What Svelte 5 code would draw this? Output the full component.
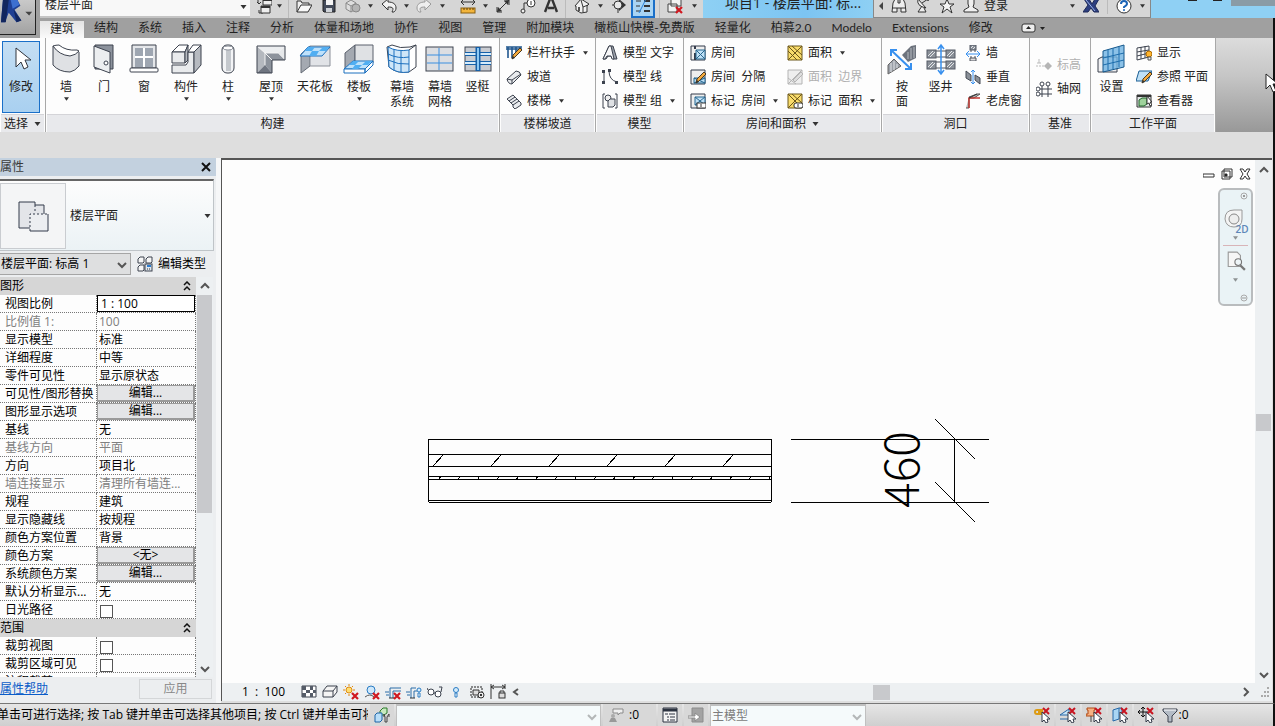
<script lang="ts">
    type BigTool = { icon: string, label: string, w: number, menu?: boolean };
    type SmallTool = { icon: string, label: string, menu?: boolean, off?: boolean };
    type Prop = { name: string, value?: string, kind?: 'input' | 'button' | 'check', off?: boolean };

    let activeTab = $state('建筑');
    let scale = $state('1 : 100');

    const tabs = ['建筑', '结构', '系统', '插入', '注释', '分析', '体量和场地', '协作', '视图', '管理',
        '附加模块', '橄榄山快模-免费版', '轻量化', '柏慕2.0', 'Modelo', 'Extensions', '修改'];

    const quick = [
        { icon: 'sync', w: 22 }, { icon: 'arrow', w: 8 }, { icon: 'sep', w: 10 },
        { icon: 'open', w: 22 }, { icon: 'save', w: 28 }, { icon: 'cube', w: 20 }, { icon: 'arrow', w: 14 },
        { icon: 'undo', w: 24 }, { icon: 'arrow', w: 10 }, { icon: 'redo', w: 26 }, { icon: 'arrow', w: 10 },
        { icon: 'gap', w: 12 }, { icon: 'measure', w: 18 }, { icon: 'arrow', w: 16 }, { icon: 'dims', w: 20 },
        { icon: 'tag', w: 30 }, { icon: 'letter', w: 16 }, { icon: 'sep', w: 12 },
        { icon: 'house', w: 22 }, { icon: 'arrow', w: 14 }, { icon: 'section', w: 24 },
        { icon: 'thin', w: 24 }, { icon: 'sep', w: 8 }, { icon: 'closeViews', w: 24 }, { icon: 'arrow', w: 14 }
    ];

    const build: BigTool[] = [
        { icon: 'wall', label: '墙', w: 40, menu: true },
        { icon: 'door', label: '门', w: 36 },
        { icon: 'window', label: '窗', w: 44 },
        { icon: 'component', label: '构件', w: 40, menu: true },
        { icon: 'column', label: '柱', w: 44, menu: true },
        { icon: 'roof', label: '屋顶', w: 42, menu: true },
        { icon: 'ceiling', label: '天花板', w: 46 },
        { icon: 'floor', label: '楼板', w: 42, menu: true },
        { icon: 'curtain', label: '幕墙\n系统', w: 44 },
        { icon: 'grid', label: '幕墙\n网格', w: 32 },
        { icon: 'mullion', label: '竖梃', w: 43 }
    ];
    const openings: BigTool[] = [
        { icon: 'byFace', label: '按\n面', w: 40 },
        { icon: 'shaft', label: '竖井', w: 37 }
    ];
    const stairs: SmallTool[] = [
        { icon: 'railing', label: '栏杆扶手', menu: true },
        { icon: 'ramp', label: '坡道' },
        { icon: 'stair', label: '楼梯', menu: true }
    ];
    const models: SmallTool[] = [
        { icon: 'modelText', label: '模型 文字' },
        { icon: 'modelLine', label: '模型 线' },
        { icon: 'modelGroup', label: '模型 组', menu: true }
    ];
    const rooms: SmallTool[] = [
        { icon: 'room', label: '房间' },
        { icon: 'roomSplit', label: '房间  分隔' },
        { icon: 'roomTag', label: '标记  房间', menu: true }
    ];
    const areas: SmallTool[] = [
        { icon: 'area', label: '面积', menu: true },
        { icon: 'areaEdge', label: '面积  边界', off: true },
        { icon: 'areaTag', label: '标记  面积', menu: true }
    ];
    const holes: SmallTool[] = [
        { icon: 'holeWall', label: '墙' },
        { icon: 'holeVert', label: '垂直' },
        { icon: 'dormer', label: '老虎窗' }
    ];
    const datum: SmallTool[] = [
        { icon: 'level', label: '标高', off: true },
        { icon: 'axes', label: '轴网' }
    ];
    const plane: SmallTool[] = [
        { icon: 'show', label: '显示' },
        { icon: 'refPlane', label: '参照 平面' },
        { icon: 'viewer', label: '查看器' }
    ];

    const graphics: Prop[] = [
        { name: '视图比例', kind: 'input' },
        { name: '比例值 1:', value: '100', off: true },
        { name: '显示模型', value: '标准' },
        { name: '详细程度', value: '中等' },
        { name: '零件可见性', value: '显示原状态' },
        { name: '可见性/图形替换', value: '编辑...', kind: 'button' },
        { name: '图形显示选项', value: '编辑...', kind: 'button' },
        { name: '基线', value: '无' },
        { name: '基线方向', value: '平面', off: true },
        { name: '方向', value: '项目北' },
        { name: '墙连接显示', value: '清理所有墙连...', off: true },
        { name: '规程', value: '建筑' },
        { name: '显示隐藏线', value: '按规程' },
        { name: '颜色方案位置', value: '背景' },
        { name: '颜色方案', value: '<无>', kind: 'button' },
        { name: '系统颜色方案', value: '编辑...', kind: 'button' },
        { name: '默认分析显示...', value: '无' },
        { name: '日光路径', kind: 'check' }
    ];
    const extents: Prop[] = [
        { name: '裁剪视图', kind: 'check' },
        { name: '裁剪区域可见', kind: 'check' },
        { name: '注释裁剪', kind: 'check' }
    ];

    const viewTools = ['detail', 'style', 'sun', 'shadow', 'crop', 'cropShow', 'glasses', 'bulb', 'worksharing', 'lockDim'];
    const pickTools = ['pickLink', 'pickUnder', 'pickPin', 'pickFace', 'pickDrag'];

    const redX = '<path d="M9 1l6 6M15 1l-6 6" stroke="#c81420" stroke-width="2" fill="none"/>';
    const lowX = '<path d="M9 9l6 6M15 9l-6 6" stroke="#d01820" stroke-width="2.2" fill="none"/>';
    const pointer = '<path d="M8 5v10l2-2 2 3 2-1-1-3h3z" fill="#fff" stroke="#333a48"/>';
    const pencil = '<path d="M6 14l1-4 7-7 2 2-7 7z" fill="#f4a93c" stroke="#4a3a20"/><path d="M6 14l1-3 2 2z" fill="#333"/>';
    const hatch = (x: number, y: number, w: number, h: number) =>
        `<rect x="${x}" y="${y}" width="${w}" height="${h}" fill="#8a9098" stroke="#555b66"/>` +
        `<path d="M${x + 1} ${y + h - 2}l${h - 3}-${h - 3}M${x + w - h + 2} ${y + h - 1}l${h - 3}-${h - 3}" stroke="#e4e6ea"/>`;

    // 32 unit drawings for the large ribbon buttons
    const large: Record<string, string> = {
        modify: '<path d="M11 5v19l5-5 3 7 4-2-3-7h6z" fill="#fff" stroke="#30343c"/>',
        wall: '<path d="M3 3Q13 12 28 8l1 1v14q-4 5-9 6Q9 29 3 22z" fill="#dfe1e4" stroke="#3c424e"/><path d="M3 3q3-1 6-1 7 6 18 5l2 1q-3 4-9 5Q9 12 3 3z" fill="#fff" stroke="#3c424e"/>',
        door: '<path d="M7 2h18v24H7z" fill="#8c929c" stroke="#3c424e"/><path d="M6 3l16 6v21L6 24z" fill="#eceef0" stroke="#3c424e"/><circle cx="18" cy="20" r="2" fill="#fff" stroke="#3c424e"/>',
        window: '<path d="M4 2h24v23H4z" fill="#e4e6e9" stroke="#3c424e"/><path d="M7 5h18v19H7z" fill="#9ea6b1"/><path d="M16 5v19M7 14h18" stroke="#fff" stroke-width="2"/><rect x="2" y="25" width="28" height="4" rx="1" fill="#fff" stroke="#3c424e"/>',
        component: '<path d="M2 9l7-7h9l-3 7z" fill="#fff" stroke="#3c424e"/><path d="M2 9h13v11H2z" fill="#e9ebed" stroke="#3c424e"/><path d="M15 9l3-7v15l-3 3z" fill="#b6bac0" stroke="#3c424e"/><path d="M2 22h14l2-3V9h6v21H2z" fill="#e9ebed" stroke="#3c424e"/><path d="M18 9l5-7h8l-7 7z" fill="#fff" stroke="#3c424e"/><path d="M24 9l7-7v20l-7 8z" fill="#b6bac0" stroke="#3c424e"/>',
        column: '<rect x="10" y="2" width="12" height="28" rx="5" fill="#f3f4f6" stroke="#3c424e"/><rect x="14" y="7" width="5" height="21" fill="#c4c8cd"/><ellipse cx="16" cy="5" rx="5" ry="2" fill="#fff" stroke="#8d929b"/>',
        roof: '<path d="M2 3h28l-7 7H10z" fill="#eceef0"/><path d="M2 3l8 7v12l-8 8z" fill="#b4b8be"/><path d="M10 10h13l7 7H17v13l-7-8z" fill="#8d939c"/><path d="M23 10l7-7v14z" fill="#e6e8ea"/><path d="M10 22l7 8H2z" fill="#6f7580"/><path d="M2 3l8 7 7 7M10 10v12M10 10h13" fill="none" stroke="#f4f4f4"/><path d="M2 3h28v14H17v13H2z" fill="none" stroke="#3c424e"/>',
        ceiling: '<path d="M2 11v19l9-7V3z" fill="#a4a9b1" stroke="#666c77"/><path d="M11 3h20v20H11z" fill="#e1e3e7" stroke="#8b9099"/><path d="M1 13l8-9h22l-8 9z" fill="#bfe1fa" stroke="#1c70bf"/><path d="M9 4h7l-3 4h7l-3 5h-7l3-5H6zM24 4h6l-3 4h-7z" fill="#51aef2"/>',
        floor: '<path d="M2 10l10-8v18L2 27z" fill="#a4a9b1" stroke="#5a606c"/><path d="M12 2h18v18H12z" fill="#dfe1e4" stroke="#5a606c"/><path d="M1 26l9-8h20l-8 8z" fill="#bfe1fa" stroke="#1c70bf"/><path d="M1 26h21v4H1zM22 26l8-8v4l-8 8z" fill="#fff" stroke="#1c70bf"/><path d="M10 18h6l-4 4h7l-4 4H9l3-4H6zM23 18h6l-4 4h-6z" fill="#51aef2"/>',
        curtain: '<path d="M1 4l5-2q8 4 18 2l6-2v22l-7 5q-12 2-20-5z" fill="#fff" stroke="#3c424e"/><path d="M2 4q9 5 21 3v22q-12 2-20-5z" fill="#cfe6f8" stroke="#1c70bf"/><path d="M2 11q10 5 21 3M2 17q10 5 21 4M8 6v21M15 8v21" fill="none" stroke="#1c70bf"/><path d="M23 7l7-5" stroke="#3c424e"/>',
        grid: '<rect x="2" y="4" width="27" height="24" fill="#dcdee2" stroke="#3c424e"/><path d="M15 5v22M3 12h25M3 20h25" stroke="#3a8fe0"/>',
        mullion: '<rect x="3" y="4" width="26" height="24" fill="#c9ccd2" stroke="#3c424e"/><path d="M3 11h26M3 20h26" stroke="#1660a8" stroke-width="4"/><path d="M3 11h26M3 20h26" stroke="#d6ecfb" stroke-width="2"/><path d="M16 4v24" stroke="#1660a8" stroke-width="5"/><path d="M16 5v22" stroke="#8cc8f4" stroke-width="2"/>',
        byFace: '<path d="M16 12l9-9 5-1v13l-8 4z" fill="#6d737d"/><path d="M25 5v11M28 4v11M22 9v7" stroke="#b8bcc2"/><path d="M2 22l6-6 7 7-8 5-5 3z" fill="#9a9fa7" stroke="#666"/><path d="M5 20v9M8 18v9M11 21v4" stroke="#e4e6e8"/><path d="M5 7l20 19M5 13V7h6M25 20v6h-6" fill="none" stroke="#3890ee" stroke-width="2"/>',
        shaft: hatch(2, 7, 9, 8) + hatch(21, 7, 9, 8) + hatch(2, 18, 9, 8) + hatch(21, 18, 9, 8) + '<path d="M11 8h10M11 14h10M11 19h10M11 25h10" stroke="#50555f"/><path d="M16 2v28M13 6l3-4 3 4M13 27l3 4 3-4" fill="none" stroke="#3890ee" stroke-width="1.500"/>',
        setPlane: '<path d="M2 16l4-2h15v15H2z" fill="#f0f0f2" stroke="#3c424e"/><path d="M7 8l21-6v22L7 29z" fill="#6fb3e2" fill-opacity=".8" stroke="#16588c"/><path d="M12 7v20M17 5v21M23 4v20M7 15l21-5M7 22l21-5" stroke="#1d6dac"/>',
        typePlan: '<path d="M2 2h16v3h9v17h-9v6H2z" fill="#e3e5e9" stroke="#333b4a"/><path d="M13 14h18v17H13z" fill="#eceef1"/><path d="M18 5v8M13 31V14h18" fill="none" stroke="#333b4a" stroke-dasharray="2 2"/><path d="M31 14v17H13" fill="none" stroke="#333b4a"/>'
    };

    // 16 unit drawings: toolbars, small ribbon rows, status bar
    const small: Record<string, string> = {
        sync: '<path d="M5 1H2v4M3 12v3h4M1 4l2 2 2-2" fill="none" stroke="#333"/><path d="M7 0h9v7H7zM5 8h9v7H5z" fill="#eee" stroke="#333"/><path d="M5 9h9M7 2h9" stroke="#333" stroke-width="2"/>',
        open: '<path d="M1 14V3h4l1 2h7v3" fill="#eee" stroke="#333"/><path d="M1 14l4-7h11l-4 7z" fill="#f8f8f8" stroke="#333"/>',
        save: '<path d="M2 2h12v12H3l-1-1z" fill="#444b5a" stroke="#222"/><path d="M5 2h7v5H5z" fill="#f4f4f4"/><path d="M5 10h6v4H5z" fill="#cfd3d8"/>',
        cube: '<path d="M1 5l5-3 5 3v6l-5 3-5-3z" fill="#ddd" stroke="#8a8a8a"/><path d="M1 5l5 3 5-3M6 8v6" fill="none" stroke="#8a8a8a"/><circle cx="11" cy="10" r="4" fill="#b4b4b4" stroke="#888"/>',
        undo: '<path d="M1 6l6-5v3c5 0 8 2 8 6 0 2-1 3-2 4h-2c2-4 1-5-4-5v3z" fill="#f2f2f2" stroke="#333"/>',
        redo: '<path d="M15 6L9 1v3C4 4 1 6 1 10c0 2 1 3 2 4h2c-2-4-1-5 4-5v3z" fill="#eee" stroke="#999"/>',
        measure: '<path d="M1 4h14M4 1L1 4l3 3M12 1l3 3-3 3" fill="none" stroke="#333"/><rect x="1" y="10" width="14" height="5" fill="#f3b53c" stroke="#8a6012"/><path d="M4 10v2M7 10v2M10 10v2M13 10v2" stroke="#5c3e08"/>',
        dims: '<path d="M2 14L14 2M2 9v5h5M9 2h5v5" fill="none" stroke="#333"/><path d="M2 14l1-5 4 4zM14 2l-1 5-4-4z" fill="#333"/>',
        tag: '<circle cx="11" cy="5" r="4" fill="#fff" stroke="#333"/><path d="M11 3v4M7 5H4v6" fill="none" stroke="#333"/><circle cx="3" cy="13" r="2" fill="#eee" stroke="#333"/>',
        letter: '<path d="M2 14L7 1h2l5 13M5 10h6" fill="none" stroke="#333" stroke-width="2.4"/>',
        house: '<path d="M1 8l6-7 8 5-2 2v6l-6 1-5-3V8z" fill="#f0f0f0" stroke="#333"/><path d="M7 2l2 7 5-2M9 9v5" fill="none" stroke="#333"/><path d="M4 9h2v4H4z" fill="#555"/>',
        section: '<path d="M8 1l7 6-7 6z" fill="#333"/><circle cx="7" cy="7" r="4" fill="#e8e8e8" stroke="#333"/><path d="M7 11v4M1 7h2" stroke="#333"/>',
        thin: '<path d="M1 3h5M1 8h4M1 13h5" stroke="#333"/><path d="M9 3h6M9 8h6M9 13h6" stroke="#333" stroke-width="2"/><path d="M4 15L11 1" stroke="#2a82d8"/>',
        closeViews: '<path d="M4 1h10v7H4zM1 6h9v8H1z" fill="#f2f2f2" stroke="#444"/>' + lowX,
        binoculars: '<path d="M2 5l2-4h3v4h2V1h3l2 4 1 9h-5v-4H6v4H1z" fill="#eee" stroke="#333"/><path d="M1 10h5M10 10h5" stroke="#333"/>',
        dish: '<path d="M3 1q-2 7 8 9zM7 8l-4 6h8l-2-4M7 5l6-4" fill="#eee" stroke="#333"/><circle cx="13" cy="2" r="1" fill="#333"/>',
        star: '<path d="M8 1l2 5h5l-4 3 2 6-5-4-5 4 2-6-4-3h5z" fill="#f4f4f4" stroke="#333"/>',
        person: '<path d="M5 1h6v5l-1 3 5 3v2H1v-2l5-3-1-3z" fill="#f0f0f0" stroke="#333"/>',
        exchange: '<path d="M1 1h5l3 5 3-5h4l-4 7 4 6h-5l-3-4-3 4H0l5-7z" fill="#2d3f80" stroke="#1e2a58"/><path d="M3 2l9 11" stroke="#9db4e8"/>',
        help: '<circle cx="8" cy="8" r="7" fill="#fff" stroke="#333"/><path d="M5 6q0-3 3-3t3 3q0 1-3 3v1" fill="none" stroke="#1b63b5" stroke-width="2"/><circle cx="8" cy="12" r="1" fill="#1b63b5"/>',
        railing: '<path d="M0 2h16M0 4h16M2 2v11M6 2v11M10 2v9M14 2v4" stroke="#22588f" stroke-width="1.6"/>' + pencil,
        ramp: '<path d="M1 10l9-8q4 0 5 4l-9 9q-4 0-5-5z" fill="#e9ebee" stroke="#3c424e"/><path d="M1 10l5 1 9-6M6 11v4" fill="none" stroke="#3c424e"/>',
        stair: '<path d="M1 6l6-4 2 2 2 2 2 2 2 2v2l-6 4-2-2V12l-2-2-2-2z" fill="#e9ebee" stroke="#3c424e"/><path d="M3 8l6-4M5 10l6-4M7 12l6-4" stroke="#3c424e"/>',
        modelText: '<path d="M1 14L7 1h4l4 13h-4l-1-3H6l-2 3z" fill="#9da2ab" stroke="#3c424e"/><path d="M1 14L7 1h2l3 13h-2l-1-3H5l-2 3z" fill="#f7f7f8" stroke="#3c424e"/>',
        modelLine: '<path d="M2 2v12M7 2q0 9 8 11" fill="none" stroke="#3c424e"/><path d="M0 1h3v3H0zM0 12h3v3H0zM6 0h3v3H6zM13 12h3v3h-3z" fill="#3c424e"/>',
        modelGroup: '<path d="M3 1H1v14h2M13 1h2v14h-2" fill="none" stroke="#3c424e"/><circle cx="6" cy="5" r="3" fill="#eee" stroke="#3c424e"/><path d="M6 8l2-2h5v6l-2 2H6z" fill="#dfe1e4" stroke="#3c424e"/>',
        room: '<path d="M1 1h14v14H1z" fill="#eee" stroke="#333b4a"/><path d="M5 1v3M5 8v7" stroke="#333b4a" stroke-width="2"/><path d="M6 5h9v9H6zM6 5l9 9M15 5l-9 9" fill="#bfe0f6" stroke="#27678f"/>',
        roomSplit: '<path d="M1 1h14v14H1z" fill="#eee" stroke="#333b4a"/><path d="M4 9h11v5H4zM4 9l11 5M15 9L4 14" fill="#bfe0f6" stroke="#27678f"/>' + pencil,
        roomTag: '<path d="M1 1h14v14H1z" fill="#eee" stroke="#333b4a"/><path d="M5 4h10v8H5zM5 4l10 8M15 4L5 12" fill="#bfe0f6" stroke="#27678f"/><rect x="7" y="10" width="9" height="5" fill="#fff" stroke="#333"/><path d="M11 11v3" stroke="#333"/>',
        area: '<path d="M1 1h14v14H1z" fill="#f9dc6b" stroke="#6b561a"/><path d="M1 1l14 14M15 1L1 15M5 1l10 9M1 6l9 9" stroke="#6b561a"/>',
        areaEdge: '<path d="M1 1h14v14H1z" fill="#eee" stroke="#b4b4b4"/><path d="M1 15L15 1M1 9l8 6M6 11l8-8 2 2-8 8z" fill="#ddd" stroke="#b4b4b4"/>',
        areaTag: '<path d="M1 1h14v14H1z" fill="#f9dc6b" stroke="#6b561a"/><path d="M1 1l14 14M15 1L1 15M5 1l10 9" stroke="#6b561a"/><rect x="7" y="10" width="9" height="5" rx="2" fill="#fff" stroke="#333"/><path d="M11 11v3" stroke="#333"/>',
        holeWall: hatch(5, 0, 6, 5) + '<path d="M5 13h6v3H5z" fill="#ddd" stroke="#50555f"/><path d="M6 5v2M10 5v2M6 11v2M10 11v2" stroke="#50555f"/><path d="M1 9h14M4 6L1 9l3 3M12 6l3 3-3 3" fill="none" stroke="#3890ee"/>',
        holeVert: '<path d="M1 2l5 4v6L1 9zM10 6l5 3v6l-5-4z" fill="#8a9098" stroke="#444a55"/><path d="M8 1v14M6 3l2-2 2 2M6 13l2 2 2-2" fill="none" stroke="#3890ee"/>',
        dormer: '<path d="M1 15h3V5h5L15 1h-3L4 4" fill="#bbb" stroke="#555"/><path d="M4 15V5h11" fill="none" stroke="#c23a34" stroke-width="1.5"/><path d="M4 5l8-4" stroke="#333"/>',
        level: '<path d="M0 9h15" stroke="#bbb" stroke-dasharray="2 1"/><path d="M3 2v4M1 6h4" stroke="#bbb"/><path d="M12 5l4 4-4 4-4-4z" fill="#b5b5b5"/>',
        axes: '<path d="M6 5v11M12 5v11M4 8h12M4 13h12" stroke="#3c424e"/><circle cx="6" cy="3" r="2" fill="#fff" stroke="#3c424e"/><circle cx="12" cy="3" r="2" fill="#fff" stroke="#3c424e"/><circle cx="2" cy="8" r="2" fill="#fff" stroke="#3c424e"/><circle cx="2" cy="13" r="2" fill="#fff" stroke="#3c424e"/>',
        show: '<path d="M1 3l12-2v11L1 15zM5 2v12M9 1v12M1 7l12-2M1 11l12-3" fill="none" stroke="#3c424e"/><circle cx="13" cy="9" r="3" fill="#ffb52e" stroke="#b06c00"/><path d="M12 12h3v3h-3z" fill="#eee" stroke="#555"/>',
        refPlane: '<path d="M3 2h13l-4 10H0z" fill="#bfe0f6" stroke="#1b5f94"/>' + pencil,
        viewer: '<path d="M1 2h14v12H1z" fill="#e4e6e8" stroke="#333"/><path d="M1 3h14" stroke="#333" stroke-width="2"/><path d="M3 7l3-2h5v6l-3 2H3z" fill="#9ed29b" stroke="#20642a"/><path d="M11 3v8l2-1 1 3 2-1-2-3h2z" fill="#fff" stroke="#333"/>',
        editType: '<path d="M1 3l2-2h4v5l-1 1H1zM9 3l2-2h4v5l-1 1H9zM1 11l2-2h4v5l-1 1H1z" fill="#f6f6f6" stroke="#3c424e"/><rect x="8" y="8" width="7" height="7" fill="#e0e7ef" stroke="#3c424e"/><path d="M10 10h4" stroke="#2c7cd0" stroke-width="2"/><path d="M10 13h1M12 13h1" stroke="#333"/>',
        detail: '<path d="M1 2h14v11H1z" fill="#fff" stroke="#3c424e"/><path d="M1 2h4v4H1zM9 2h3v4H9zM5 6h4v3H5zM12 6h3v3h-3zM1 9h4v4H1zM9 9h3v4H9z" fill="#555c68"/>',
        style: '<path d="M1 7l4-5h10v6l-4 5H1z" fill="#f4f4f4" stroke="#3c424e"/><path d="M1 7h10v6M11 7l4-5" fill="none" stroke="#3c424e"/>',
        sun: '<circle cx="6" cy="6" r="3" fill="#ffdf70" stroke="#e08a10"/><path d="M6 0v2M6 10v2M0 6h2M10 6h2M2 2l1 1M9 3l1-1M2 10l1-1" stroke="#e08a10"/>' + lowX,
        shadow: '<circle cx="7" cy="6" r="4" fill="#cfe8fa" stroke="#2a7cc4"/><path d="M1 13q5-4 9 0" fill="none" stroke="#555"/>' + lowX,
        crop: '<path d="M0 8h4M1 11h3M5 14V4h11M8 14V7h8" fill="none" stroke="#2a6ca8"/><path d="M4 14h5" stroke="#333"/>' + lowX,
        cropShow: '<path d="M0 8h4M1 11h3M5 14V4h5M8 14V7h3" fill="none" stroke="#2a6ca8"/><path d="M4 14h5" stroke="#333"/><circle cx="13" cy="6" r="2" fill="#d5ecfb" stroke="#2a7cc4"/><path d="M12 9h2v4h-2z" fill="#fff" stroke="#2a7cc4"/>',
        glasses: '<circle cx="4" cy="8" r="3" fill="#fff" stroke="#3c424e"/><circle cx="11" cy="10" r="3" fill="#fff" stroke="#3c424e"/><path d="M1 6L0 4M7 9h2M14 8l1-5h-3" fill="none" stroke="#3c424e"/>',
        bulb: '<circle cx="8" cy="6" r="2.5" fill="#d5ecfb" stroke="#2a7cc4"/><path d="M7 9h2v4H7z" fill="#fff" stroke="#2a7cc4"/>',
        worksharing: '<path d="M2 3h11v10H2z" fill="none" stroke="#222" stroke-dasharray="2 1"/><path d="M4 6h6v5H4z" fill="#ddd" stroke="#333"/><circle cx="12" cy="11" r="3" fill="#eee" stroke="#333"/><path d="M11 10h2v2h-2z" fill="#333"/>',
        lockDim: '<path d="M1 0v15M15 0v5M1 3h14M4 1L1 3l3 2M12 1l3 2-3 2" fill="none" stroke="#333"/><rect x="9" y="9" width="6" height="5" fill="#ddd" stroke="#333"/><path d="M10 9V7h4v2" fill="none" stroke="#333"/>',
        worksets: '<path d="M6 4l3-3h4v5L10 8H6z" fill="#c8eabf" stroke="#2b7a2a"/><path d="M1 8l2-2h5v7l-2 2H1z" fill="#b9def8" stroke="#1d64a8"/><path d="M10 7l1 3v5h2v-5l2-3M10 7v3M15 7v3" fill="none" stroke="#444"/>',
        requests: '<path d="M5 2h10v4h-3l-2 2V6H5z" fill="#f0f0f0" stroke="#8a8a8a"/><path d="M1 15l2-4h4l2 4z" fill="#999"/><circle cx="5" cy="9" r="2" fill="#aaa"/>',
        options: '<path d="M1 1h14v14H1z" fill="#f4f4f4" stroke="#2c3340"/><path d="M1 3h14" stroke="#2c3340" stroke-width="3"/><path d="M3 7h3M7 7h6M5 10h2M8 10h5M5 13h2M8 13h5" stroke="#2c3340"/>',
        addOption: '<path d="M4 1h11v14H4z" fill="#a3a3a3" stroke="#8c8c8c"/><path d="M0 9h7V6l5 4-5 4v-3H0z" fill="#fff" stroke="#8c8c8c"/>',
        filter: '<path d="M1 2h14v2l-5 5v6H6V9L1 4z" fill="#b4bcc6" stroke="#3c424e"/><path d="M2 3h12" stroke="#fff"/>',
        pickLink: '<path d="M9 3H3Q1 3 1 5t2 2h5M4 5h5" fill="none" stroke="#dc9a12" stroke-width="2"/>' + redX + pointer,
        pickUnder: '<path d="M0 8l9-6v6zM0 12h9" fill="#cbe6f8" stroke="#2668a8"/>' + redX + pointer,
        pickPin: '<path d="M1 1h8v2H8v4h2v2H0V7h2V3H1z" fill="#f6b284" stroke="#b04a16"/><path d="M5 9v6" stroke="#444"/>' + redX + pointer,
        pickFace: '<path d="M1 3l6-2v11l-6 2zM7 1h3v9" fill="#a9d5f4" stroke="#2668a8"/>' + redX + pointer,
        pickDrag: '<path d="M5 0v10M0 5h10M3 2l2-2 2 2M3 8l2 2 2-2M2 3L0 5l2 2" fill="none" stroke="#111"/>' + redX + pointer
    };
</script>

{#snippet big(name: string)}
    <svg class="i32" viewBox="0 0 32 32" aria-hidden="true">{@html large[name]}</svg>
{/snippet}

{#snippet ico(name: string)}
    <svg class="i16" viewBox="0 0 16 16" aria-hidden="true">{@html small[name]}</svg>
{/snippet}

{#snippet down()}
    <svg class="down" viewBox="0 0 6 4" aria-hidden="true"><path d="M0 0h6L3 4z" fill="#333" /></svg>
{/snippet}

{#snippet chevron(d: string)}
    <svg class="chev" viewBox="0 0 10 10" aria-hidden="true"><path {d} fill="none" stroke="#555" stroke-width="2" /></svg>
{/snippet}

{#snippet bigTools(list: BigTool[])}
    {#each list as t (t.label)}
        <button class="big" style:width="{t.w}px">
            {@render big(t.icon)}
            <span>{t.label}</span>
            {#if t.menu}{@render down()}{/if}
        </button>
    {/each}
{/snippet}

{#snippet smallTools(list: SmallTool[])}
    <div class="stack">
        {#each list as t (t.label)}
            <button class="small" disabled={t.off}>
                {@render ico(t.icon)}
                <span>{t.label}</span>
                {#if t.menu}{@render down()}{/if}
            </button>
        {/each}
    </div>
{/snippet}

{#snippet group(title: string, rows: Prop[])}
    <tbody>
        <tr class="group"><th colspan="2"><div>{title}
            <svg viewBox="0 0 8 10" aria-hidden="true"><path d="M1 4l3-3 3 3M1 9l3-3 3 3" fill="none" stroke="#111" stroke-width="1.5" /></svg>
        </div></th></tr>
        {#each rows as row (row.name)}
            <tr class:off={row.off}>
                <th scope="row">{row.name}</th>
                <td>
                    {#if row.kind === 'input'}
                        <input type="text" bind:value={scale} aria-label={row.name} />
                    {:else if row.kind === 'button'}
                        <button aria-label="{row.name} {row.value}">{row.value}</button>
                    {:else if row.kind === 'check'}
                        <input type="checkbox" aria-label={row.name} />
                    {:else}
                        {row.value}
                    {/if}
                </td>
            </tr>
        {/each}
    </tbody>
{/snippet}

<div class="app">
    <header class="top">
        <button class="logo" aria-label="应用程序菜单">
            <svg viewBox="0 0 36 36" aria-hidden="true">
                <path d="M3 0h15l3 6-6 4 7 11-5 2-8-10-4 10H1z" fill="#1f3f94" />
                <path d="M3 0h6L6 23H1zM14 10l8 11-5 2z" fill="#12265e" />
                <path d="M11 0h7l2 5-7 4z" fill="#3d6fd0" />
                <path d="M26 12h7l-3 4z" fill="#444" />
            </svg>
        </button>
        <div class="titlebar">
            <div class="bar">
                <div class="view-pick">
                    <select aria-label="当前视图"><option>楼层平面</option></select>
                    {@render down()}
                </div>
                <div class="quick">
                    {#each quick as q}
                        {#if q.icon === 'sep' || q.icon === 'gap'}
                            <i class={q.icon} style:width="{q.w}px"></i>
                        {:else}
                            <button class:on={q.icon === 'thin'} style:width="{q.w}px" aria-label={q.icon}>
                                {#if q.icon === 'arrow'}{@render down()}{:else}{@render ico(q.icon)}{/if}
                            </button>
                        {/if}
                    {/each}
                </div>
                <div class="caption">项目1 - 楼层平面: 标...</div>
                <div class="info">
                    <svg class="left" viewBox="0 0 4 8" aria-hidden="true"><path d="M4 0v8L0 4z" fill="#444" /></svg>
                    <button aria-label="搜索">{@render ico('binoculars')}</button>
                    <button aria-label="通讯中心">{@render ico('dish')}</button>
                    <button aria-label="收藏夹">{@render ico('star')}</button>
                    <button class="sign-in">{@render ico('person')}登录</button>
                    <button class="push" aria-label="登录菜单">{@render down()}</button>
                    <button aria-label="Exchange">{@render ico('exchange')}</button>
                    <button class="help" aria-label="帮助">{@render ico('help')}</button>
                    {@render down()}
                </div>
                <div class="win">
                    <button aria-label="最小化"></button>
                    <button aria-label="最大化"></button>
                    <button class="close" aria-label="关闭"></button>
                </div>
            </div>
        </div>
        <nav class="tabs">
            {#each tabs as tab (tab)}
                <button class:active={tab === activeTab} onclick={() => activeTab = tab}>{tab}</button>
            {/each}
            <button class="fold" aria-label="最小化功能区">
                <svg viewBox="0 0 24 10" aria-hidden="true">
                    <rect x="1" y="1" width="13" height="8" rx="2" fill="#eee" stroke="#333" />
                    <path d="M5 6h5L7.500 3zM19 4h5l-2.500 3z" fill="#222" />
                </svg>
            </button>
        </nav>
    </header>

    <div class="ribbon">
        <section class="modify">
            <div class="tools"><button class="big selected">{@render big('modify')}<span>修改</span></button></div>
            <h2>选择 {@render down()}</h2>
        </section>
        <section><div class="tools">{@render bigTools(build)}</div><h2>构建</h2></section>
        <section class="stairs"><div class="tools">{@render smallTools(stairs)}</div><h2>楼梯坡道</h2></section>
        <section class="models"><div class="tools">{@render smallTools(models)}</div><h2>模型</h2></section>
        <section class="rooms">
            <div class="tools">{@render smallTools(rooms)}{@render smallTools(areas)}</div>
            <h2>房间和面积 {@render down()}</h2>
        </section>
        <section class="openings"><div class="tools">{@render bigTools(openings)}{@render smallTools(holes)}</div><h2>洞口</h2></section>
        <section class="datum"><div class="tools">{@render smallTools(datum)}</div><h2>基准</h2></section>
        <section class="plane">
            <div class="tools">
                <button class="big">{@render big('setPlane')}<span>设置</span></button>
                {@render smallTools(plane)}
            </div>
            <h2>工作平面</h2>
        </section>
        <div class="rest">
            <svg viewBox="0 0 14 20" aria-hidden="true"><path d="M1 1v15l4-4 3 7 3-1-3-7h5z" fill="#fff" stroke="#222" /></svg>
        </div>
    </div>

    <div class="work">
        <aside class="palette">
            <div class="head">属性
                <button aria-label="关闭属性"><svg viewBox="0 0 10 10"><path d="M1 1l8 8M9 1L1 9" stroke="#111" stroke-width="2" /></svg></button>
            </div>
            <button class="type">
                <span class="thumb">{@render big('typePlan')}</span>
                <span class="type-name">楼层平面</span>
                {@render down()}
            </button>
            <div class="instance">
                <div class="combo">
                    <select aria-label="图元"><option>楼层平面: 标高 1</option></select>
                    {@render chevron('M1 3l4 4 4-4')}
                </div>
                <button>{@render ico('editType')}编辑类型</button>
            </div>
            <div class="props">
                <div class="rows">
                    <table>
                        <colgroup><col class="name"><col></colgroup>
                        {@render group('图形', graphics)}
                        {@render group('范围', extents)}
                    </table>
                </div>
                <div class="vbar">
                    {@render chevron('M1 7l4-4 4 4')}
                    <i></i>
                    {@render chevron('M1 3l4 4 4-4')}
                </div>
            </div>
            <footer>
                <a href="#help">属性帮助</a>
                <button disabled>应用</button>
            </footer>
        </aside>

        <main class="view">
            <div class="canvas">
                <svg class="drawing" viewBox="420 410 580 120" shape-rendering="crispEdges" aria-label="楼板剖面">
                    <g fill="none" stroke="#000">
                        <path d="M428.500 502V439.500H771.500V502" />
                        <path d="M428 454.500h343M428 466.500h343M428 476.500h343M428 479.500h343M428 500.500h343M429 502.500h342" />
                        {#each [0, 1, 2, 3, 4, 5] as n}
                            <path d="M{433 + n * 58} 466l11-12" />
                        {/each}
                        {#each Array(18) as _, n}
                            <path d="M{439 + n * 19.4} 479l2-3" />
                        {/each}
                        <path d="M791 439.500h198M791 502.500h198M954.500 439v63" />
                        <path d="M935 419l40 40M935 482l40 40" />
                    </g>
                    <text transform="translate(919 508) rotate(-90)">460</text>
                </svg>
                <div class="doc-controls">
                    <button aria-label="最小化视图"><svg viewBox="0 0 12 12"><path d="M0 6h11v3H0z" fill="#fff" stroke="#333" /></svg></button>
                    <button aria-label="还原视图"><svg viewBox="0 0 12 12"><path d="M3 1h8v8H3zM1 3h8v8H1z" fill="#fff" stroke="#333" /><path d="M4 6h2v2H4z" stroke="#333" /></svg></button>
                    <button aria-label="关闭视图"><svg viewBox="0 0 12 12"><path d="M1 1h3l2 3 2-3h3L8 6l3 5H8L6 8l-2 3H1l3-5z" fill="#fff" stroke="#333" /></svg></button>
                </div>
                <div class="nav">
                    <svg class="dot" viewBox="0 0 8 8"><circle cx="4" cy="4" r="3" fill="none" stroke="#aaa" /><path d="M3 3l2 2M5 3L3 5" stroke="#999" /></svg>
                    <button class="wheel" aria-label="二维控制盘">
                        <svg viewBox="0 0 20 20"><path d="M1 10q0-9 9-9h8v9q0 8-8 8t-9-8z" fill="#f4f4f4" stroke="#999" /><circle cx="10" cy="10" r="5" fill="#eee" stroke="#888" /></svg>
                        <span>2D</span>
                    </button>
                    {@render down()}
                    <hr>
                    <button aria-label="区域放大">
                        <svg viewBox="0 0 18 18"><path d="M2 1h8l3 3v10H2z" fill="#f6f6f6" stroke="#999" /><circle cx="11" cy="10" r="3" fill="#eef5f8" stroke="#777" /><path d="M13 13l4 4" stroke="#777" stroke-width="2" /></svg>
                    </button>
                    {@render down()}
                    <svg class="dot end" viewBox="0 0 8 8"><circle cx="4" cy="4" r="3" fill="none" stroke="#aaa" /><path d="M2 4h4" stroke="#999" /></svg>
                </div>
            </div>
            <div class="vbar wide">
                {@render chevron('M1 7l4-4 4 4')}
                <i></i>
                {@render chevron('M1 3l4 4 4-4')}
            </div>
            <div class="view-bar">
                <button class="ratio">1&nbsp; :&nbsp; 100</button>
                {#each viewTools as name}
                    <button aria-label={name}>{@render ico(name)}</button>
                {/each}
                {@render chevron('M7 2L3 5l4 3')}
                <i></i>
                {@render chevron('M3 1l4 4-4 4')}
            </div>
            <svg class="grip" viewBox="0 0 16 16" aria-hidden="true"><path d="M12 5h2M9 9h2M12 9h2M6 13h2M9 13h2M12 13h2" stroke="#aaa" stroke-width="2" /></svg>
        </main>
    </div>

    <footer class="status">
        <p>单击可进行选择; 按 Tab 键并单击可选择其他项目; 按 Ctrl 键并单击可将</p>
        <button aria-label="工作集">{@render ico('worksets')}</button>
        <div class="combo workset">
            <select aria-label="活动工作集"><option></option></select>
            {@render chevron('M1 3l4 4 4-4')}
        </div>
        <button class="req">{@render ico('requests')}:0</button>
        <button aria-label="设计选项">{@render ico('options')}</button>
        <button aria-label="添加到设计选项集">{@render ico('addOption')}</button>
        <div class="combo option">
            <select aria-label="活动设计选项"><option>主模型</option></select>
            {@render chevron('M1 3l4 4 4-4')}
        </div>
        <div class="picks">
            {#each pickTools as name}
                <button aria-label={name}>{@render ico(name)}</button>
            {/each}
            <button class="filter">{@render ico('filter')}:0</button>
        </div>
    </footer>
</div>

<style>
:global(body) {
    margin: 0;
    background: #dedede;
}
.app {
    display: flex;
    flex-direction: column;
    height: 100vh;
    overflow: hidden;
    box-sizing: border-box;
    font: 12px/16px "Open Sans", "Noto Sans CJK SC", sans-serif;
    color: #222;
}
button, select, input {
    font: inherit;
    color: inherit;
    margin: 0;
    padding: 0;
    border: 0;
    border-radius: 0;
    background: none;
    box-sizing: border-box;
}
svg {
    flex: none;
    display: block;
}
.i32 {
    width: 32px;
    height: 32px;
}
.i16 {
    width: 16px;
    height: 16px;
}
.down {
    width: 5px;
    height: 4px;
}
.chev {
    width: 10px;
    height: 10px;
}

/* title bar and tabs */
.top {
    display: grid;
    grid-template: 18px 20px / 40px 1fr;
    flex: none;
    background: #a0a0a0;
}
.logo {
    grid-row: 1 / 3;
    width: 36px;
    height: 35px;
    background: linear-gradient(#c9c9c9, #a2a2a2);
    border: solid #222;
    border-width: 0 1px 1px 0;
    overflow: hidden;
}
.titlebar {
    display: flex;
    align-items: flex-end;
    overflow: hidden;
    background: #d6d6d6;
}
.bar {
    flex: 1;
    display: flex;
    height: 24px;
    min-width: 0;
}
.view-pick {
    position: relative;
    width: 210px;
    margin-right: 3px;
    background: #f8f8f8;
    border-bottom: 2px solid #c4c4c4;
    box-sizing: border-box;
}
.view-pick select {
    appearance: none;
    width: 100%;
    height: 100%;
    padding-left: 5px;
}
.view-pick .down {
    position: absolute;
    right: 3px;
    top: 11px;
    width: 7px;
}
.quick {
    display: flex;
    align-items: center;
}
.quick button {
    display: flex;
    justify-content: center;
    align-items: center;
    height: 24px;
}
.quick .on {
    background: #a8d4f4;
    border: 2px solid #1a6fc8;
}
.sep {
    height: 24px;
    background: linear-gradient(#bbb, #bbb) center / 1px 100% no-repeat;
}
.caption {
    flex: 1;
    margin-left: 2px;
    padding-left: 22px;
    font-size: 14px;
    line-height: 18px;
    white-space: nowrap;
    background: linear-gradient(90deg, #8ed0f4, #7cc4f2 60%, #8ed0f4);
    overflow: hidden;
}
.info {
    display: flex;
    align-items: center;
    gap: 8px;
    width: 278px;
    padding: 0 5px;
    box-sizing: border-box;
    border: solid #888;
    border-width: 0 1px 1px;
}
.info .left {
    width: 4px;
    height: 8px;
}
.sign-in {
    display: flex;
    align-items: center;
    gap: 5px;
}
.push {
    margin-left: auto;
}
.info .help {
    border-left: 1px solid #bbb;
    padding-left: 8px;
}
.win {
    display: flex;
    align-items: flex-start;
    justify-content: flex-end;
    gap: 16px;
    width: 124px;
    padding-top: 6px;
    box-sizing: border-box;
    background: #8fd0f4;
}
.win button {
    width: 9px;
    height: 1px;
    background: #222;
}
.win .close {
    width: 44px;
    height: 6px;
    margin-left: -7px;
    background: #8a9ba6;
}
.tabs {
    display: flex;
    min-width: 0;
    background: #a0a0a0;
    border-right: 2px solid #111;
    font-family: Lato, "Noto Sans CJK SC", sans-serif;
}
.tabs button {
    padding: 0 10px;
    white-space: nowrap;
}
.tabs .active {
    background: linear-gradient(#e4e4e4, #fafafa);
    margin-top: 3px;
    padding-bottom: 3px;
}
.tabs .fold {
    padding: 0;
    margin-left: 18px;
}
.fold svg {
    width: 24px;
    height: 10px;
}

/* ribbon */
.ribbon {
    display: flex;
    flex: none;
    height: 94px;
    border-right: 2px solid #111;
    background: #fdfdfd;
}
.ribbon section {
    display: flex;
    flex-direction: column;
    flex: none;
    border-right: 1px solid #a8a8a8;
    box-sizing: border-box;
}
.tools {
    flex: 1;
    display: flex;
}
.ribbon h2 {
    display: flex;
    align-items: center;
    justify-content: center;
    gap: 6px;
    height: 18px;
    margin: 0 1px;
    font: inherit;
    background: #e8e9ec;
    border-top: 1px solid #d4d4d8;
    box-sizing: border-box;
}
.ribbon h2 .down {
    width: 7px;
}
.big {
    display: flex;
    flex-direction: column;
    align-items: center;
    padding-top: 5px;
    line-height: 15px;
    white-space: pre;
}
.big span {
    margin-top: 4px;
}
.big .down {
    margin-top: 3px;
}
.modify {
    width: 46px;
}
.selected {
    width: 38px;
    margin: 3px 2px 1px;
    padding-top: 1px;
    background: linear-gradient(#c4def3, #a9d0f0);
    border: 1px solid #1a6fc8;
}
.stack {
    display: flex;
    flex-direction: column;
    padding-top: 3px;
}
.small {
    display: flex;
    align-items: center;
    gap: 5px;
    height: 24px;
    white-space: pre;
}
.small .down {
    margin-left: 3px;
}
.small:disabled {
    color: #b0b0b0;
}
.stairs {
    width: 96px;
}
.models {
    width: 88px;
}
.rooms {
    width: 198px;
}
.rooms .stack:first-child {
    width: 97px;
}
.openings {
    width: 148px;
}
.stairs .stack, .models .stack, .rooms .stack, .openings .stack, .datum .stack {
    margin-left: 6px;
}
.rooms .stack + .stack {
    margin-left: 0;
}
.datum {
    width: 61px;
}
.datum .stack {
    padding-top: 15px;
}
.plane {
    width: 125px;
}
.plane .big {
    width: 41px;
}
.plane .stack {
    margin-left: 4px;
}
.rest {
    position: relative;
    flex: 1;
    background: linear-gradient(#dcdcdc, #c6c6c6 40%, #989898);
}
.rest svg {
    position: absolute;
    right: -6px;
    top: 35px;
    width: 14px;
    height: 20px;
}

/* properties palette */
.work {
    flex: 1;
    display: flex;
    min-height: 0;
    padding-top: 26px;
    border-right: 2px solid #111;
}
.palette {
    display: flex;
    flex-direction: column;
    width: 216px;
    flex: none;
    padding-right: 5px;
    background: linear-gradient(90deg, #eceef0 216px, #f6f7f8 216px);
}
.head {
    display: flex;
    justify-content: space-between;
    align-items: center;
    height: 18px;
    padding-right: 5px;
    background: #c3d1df;
    color: #3a3a3a;
}
.head svg {
    width: 10px;
    height: 10px;
}
.type {
    display: flex;
    align-items: center;
    height: 72px;
    margin: 3px 2px 0 0;
    padding-right: 2px;
    background: linear-gradient(#fdfdfd, #ebf2f5);
    border: 1px solid #bfc4c8;
    border-top: 2px solid #666;
    border-left: 0;
}
.thumb {
    display: flex;
    align-items: center;
    justify-content: center;
    width: 66px;
    height: 66px;
    background: #f4f5f6;
    border: 1px solid #c9ccd0;
    box-sizing: border-box;
}
.type-name {
    flex: 1;
    padding-left: 4px;
    text-align: left;
}
.type .down {
    width: 7px;
}
.instance {
    display: flex;
    align-items: center;
    height: 26px;
    color: #000;
}
.combo {
    position: relative;
    width: 131px;
    height: 22px;
    border: 1px solid #a5a5a5;
    border-left: 0;
    background: #dedfe0;
    box-sizing: border-box;
}
.combo select {
    appearance: none;
    display: block;
    width: 100%;
    height: 100%;
    padding-left: 1px;
}
.combo .chev {
    position: absolute;
    right: 3px;
    top: 6px;
    pointer-events: none;
}
.instance button {
    display: flex;
    align-items: center;
    gap: 5px;
    margin-left: 6px;
}
.props {
    flex: 1;
    display: flex;
    min-height: 0;
}
.rows {
    flex: 1;
    overflow: hidden;
    background: #fdfdfd;
}
table {
    width: 100%;
    table-layout: fixed;
    border-collapse: separate;
    border-spacing: 0;
    color: #000;
}
.name {
    width: 97px;
}
th, td {
    height: 18px;
    padding: 0 0 0 2px;
    font-weight: normal;
    text-align: left;
    line-height: 16px;
    white-space: nowrap;
    overflow: hidden;
    border: dotted #777;
    border-width: 0 1px 1px 0;
    box-sizing: border-box;
}
th[scope] {
    padding-left: 5px;
}
.group th {
    padding: 0;
    border: 0;
    background: #d6d6d6;
}
.group div {
    display: flex;
    justify-content: space-between;
    align-items: center;
    padding-right: 5px;
}
.group svg {
    width: 8px;
    height: 10px;
}
.off th, .off td {
    color: #808080;
}
td input[type="text"] {
    display: block;
    width: 100%;
    height: 17px;
    padding-left: 3px;
    background: #fff;
    border: 1px solid #000;
}
td:has(input[type="text"]), td:has(button) {
    padding: 0;
}
td button {
    display: block;
    width: 100%;
    height: 17px;
    line-height: 14px;
    background: #e4e5e7;
    border: 1px solid #9a9a9a;
    border-right-width: 2px;
    border-bottom-width: 2px;
}
input[type="checkbox"] {
    appearance: none;
    display: block;
    width: 13px;
    height: 13px;
    margin: 3px 0 0 1px;
    background: #fff;
    border: 1px solid #555;
}
.vbar {
    display: flex;
    flex-direction: column;
    align-items: center;
    width: 17px;
    padding: 4px 0 3px;
    background: #edf0f2;
    box-sizing: border-box;
}
.props .vbar {
    margin-right: 3px;
}
.vbar i {
    flex: 0 1 218px;
    width: 15px;
    margin: 4px 0 auto;
    background: #c8c9cc;
}
.palette footer {
    display: flex;
    align-items: center;
    justify-content: space-between;
    height: 26px;
    padding: 0 4px 2px 0;
    box-sizing: border-box;
}
.palette a {
    color: #0a5cc8;
}
.palette footer button {
    width: 73px;
    height: 20px;
    color: #888;
    border: 1px solid #d4d6d8;
}

/* drawing view */
.view {
    flex: 1;
    display: grid;
    grid-template: 1fr 18px / 1fr 17px;
    min-width: 0;
    margin: 0 1px 2px 0;
    background: #edf0f2;
    border: solid #555;
    border-width: 2px 0 0 1px;
}
.canvas {
    position: relative;
    background: #fdfdfd;
    overflow: hidden;
}
.drawing {
    position: absolute;
    left: 198px;
    top: 250px;
    width: 580px;
    height: 120px;
}
.drawing text {
    font: 300 48px "Noto Sans CJK SC", sans-serif;
}
.doc-controls {
    position: absolute;
    right: 4px;
    top: 8px;
    display: flex;
    gap: 6px;
}
.doc-controls svg {
    width: 12px;
    height: 12px;
}
.nav {
    position: absolute;
    right: 2px;
    top: 28px;
    display: flex;
    flex-direction: column;
    align-items: center;
    gap: 5px;
    width: 35px;
    height: 118px;
    padding: 2px 3px;
    box-sizing: border-box;
    background: #eaf3f6;
    border: 2px solid #b9bcbe;
    border-radius: 6px;
}
.dot {
    width: 8px;
    height: 8px;
    margin-left: auto;
}
.dot.end {
    margin-top: auto;
}
.wheel {
    position: relative;
    margin-top: 4px;
}
.wheel svg {
    width: 20px;
    height: 20px;
    margin-right: 4px;
}
.wheel span {
    position: absolute;
    right: -1px;
    bottom: -6px;
    font-size: 10px;
    line-height: 12px;
    font-weight: 600;
    color: #5c86b8;
}
.nav .down {
    margin-top: 2px;
    opacity: 0.5;
}
.nav hr {
    width: 100%;
    margin: 0;
    border: 0;
    border-top: 1px solid #d8b4b8;
}
.nav button svg {
    width: 20px;
    height: 20px;
}
.vbar.wide {
    padding: 5px 0 3px;
}
.vbar.wide i {
    flex: 0 0 17px;
    margin: auto 0;
}
.view-bar {
    display: flex;
    align-items: center;
    gap: 5px;
    padding: 0 4px 0 20px;
    color: #000;
}
.ratio {
    width: 54px;
    text-align: left;
    white-space: nowrap;
}
.view-bar i {
    width: 17px;
    height: 15px;
    margin: 0 auto;
    background: #c8c9cc;
}
.grip {
    width: 16px;
    height: 16px;
}

/* status bar */
.status {
    display: flex;
    align-items: center;
    gap: 2px;
    flex: none;
    height: 23px;
    border-top: 1px solid #777;
    border-right: 2px solid #111;
    background: linear-gradient(#e6e6e6, #cfcfcf);
    box-sizing: border-box;
    color: #000;
}
.status p {
    width: 368px;
    margin: 0;
    overflow: hidden;
    white-space: nowrap;
    text-indent: -3px;
}
.status button {
    display: flex;
    align-items: center;
    justify-content: center;
    width: 24px;
    height: 22px;
    background: #d8d8d8;
}
.status .combo {
    height: 22px;
    background: #f5fafb;
    border: 1px solid #c0c0c0;
    border-width: 2px 1px 0;
}
.workset {
    width: 205px;
}
.status .req {
    width: 53px;
    gap: 5px;
    justify-content: flex-start;
    padding-left: 5px;
}
.option {
    width: 156px;
    color: #7c7c7c;
}
.status .chev {
    opacity: 0.4;
}
.picks {
    display: flex;
    gap: 2px;
    margin-left: auto;
    padding-right: 82px;
}
.status .filter {
    width: 31px;
    background: none;
}
</style>
